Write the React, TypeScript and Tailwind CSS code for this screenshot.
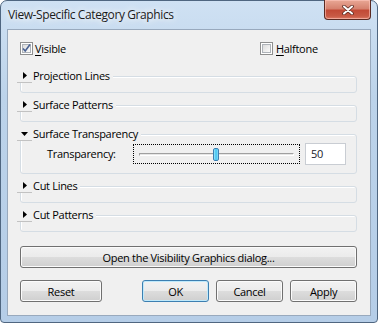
import React from 'react';

interface SectionProps {
  title: string;
  open?: boolean;
  children?: React.ReactNode;
}

function Checkbox({ checked = false }: { checked?: boolean }) {
  return (
    <div className="flex h-[13px] w-[13px] items-center justify-center border border-[#8e8f8f] bg-[#f4f4f4] shadow-[inset_0_0_0_1px_#fff]">
      <div className="flex h-[9px] w-[9px] items-center justify-center border border-[#aeb3b9] bg-gradient-to-br from-[#dcdcdc] to-[#fbfbfb]">
        {checked && (
          <svg width="9" height="9" viewBox="0 0 9 9" className="overflow-visible">
            <path d="M1 4.5 L3.2 7 L8 0.5" fill="none" stroke="#4a6293" strokeWidth="1.6" />
          </svg>
        )}
      </div>
    </div>
  );
}

function Section({ title, open = false, children }: SectionProps) {
  return (
    <fieldset className="rounded-[3px] border border-[#d5dde4] shadow-[inset_1px_1px_0_#fff]">
      <legend className="ml-[-4px] flex h-[14px] items-center bg-[#f0f0f0]">
        <div className="flex h-[14px] w-[15px] items-center justify-center border-b border-[#c2c2c2]">
          {open ? (
            <svg width="7" height="4" viewBox="0 0 7 4">
              <polygon points="0,0 7,0 3.5,4" fill="#000" />
            </svg>
          ) : (
            <svg width="4" height="7" viewBox="0 0 4 7">
              <polygon points="0,0 4,3.5 0,7" fill="#000" />
            </svg>
          )}
        </div>
        <span className="ml-[1px] pr-[3px] leading-[14px]">{title}</span>
      </legend>
      {children ?? <div className="h-[9px]" />}
    </fieldset>
  );
}

function WinButton({
  children,
  className = '',
  isDefault = false,
}: {
  children: React.ReactNode;
  className?: string;
  isDefault?: boolean;
}) {
  return (
    <button
      className={`flex h-[22px] items-center justify-center rounded-[3px] border bg-[linear-gradient(#f2f2f2_0%,#ebebeb_50%,#dddddd_50%,#cfcfcf_100%)] leading-none text-black ${
        isDefault
          ? 'border-[#3c7fb1] shadow-[inset_0_0_0_1px_#bfe9fb]'
          : 'border-[#707070] shadow-[inset_0_0_0_1px_#fbfbfb]'
      } ${className}`}
    >
      {children}
    </button>
  );
}

export default function App() {
  return (
    <div className="h-[323px] w-[378px] bg-white">
      <div className="h-[323px] w-[378px] rounded-t-[7px] rounded-b-[4px] border border-[#4f6680] bg-[linear-gradient(180deg,#cfe1f3_0%,#bcd3ea_30%,#b5cde7_100%)] font-['Open_Sans',sans-serif] text-[11px] tracking-[-0.3px] text-black">
        {/* Title bar */}
        <div className="flex h-[28px] items-start">
          <div className="pl-[7px] pt-[6px] text-[12px] leading-[16px] tracking-[-0.4px] text-[#1b1b1b] [text-shadow:0_0_6px_#fff,0_0_10px_#fff]">
            View-Specific Category Graphics
          </div>
          <button className="ml-auto mr-[6px] mt-[-1px] flex h-[20px] w-[47px] items-center justify-center rounded-b-[4px] border border-t-0 border-[#5a2a22] bg-[linear-gradient(#e9a896_0%,#d6826f_45%,#c24a36_55%,#c85a45_85%,#dd7a64_100%)] shadow-[inset_0_0_0_1px_rgba(255,200,190,0.6)]">
            <svg width="12" height="10" viewBox="0 0 12 10">
              <path d="M2 1.5 L10 8.5 M10 1.5 L2 8.5" stroke="#5a2a22" strokeWidth="3.6" strokeLinecap="round" />
              <path d="M2 1.5 L10 8.5 M10 1.5 L2 8.5" stroke="#fff" strokeWidth="2" strokeLinecap="round" />
            </svg>
          </button>
        </div>

        {/* Client area */}
        <div className="mx-[6px] h-[287px] border border-[#98a9bd] bg-[#f0f0f0] pl-[12px] pr-[13px] pt-[12px]">
          <div className="flex h-[13px] items-center">
            <div className="flex w-[240px] items-center">
              <Checkbox checked />
              <span className="ml-[2px] leading-[13px]">
                <span className="underline underline-offset-2">V</span>isible
              </span>
            </div>
            <div className="flex items-center">
              <Checkbox />
              <span className="ml-[3px] leading-[13px]">
                <span className="underline underline-offset-2">H</span>alftone
              </span>
            </div>
          </div>

          <div className="mt-[14px] flex flex-col gap-[5px]">
            <Section title="Projection Lines" />
            <Section title="Surface Patterns" />
            <Section title="Surface Transparency" open>
              <div className="h-[32px] pl-[26px] pt-[2px]">
                <div className="flex h-[22px] items-center">
                  <span className="w-[86px]">Transparency:</span>
                  <div className="flex h-[20px] w-[167px] items-center border border-dotted border-black px-[5px]">
                    <div className="relative h-[3px] flex-1 border-l border-t border-[#a0a0a0] border-b border-b-white border-r border-r-white bg-[#e6e6e6]">
                      <div className="absolute left-[73px] top-[-6px] h-[13px] w-[6px] rounded-[2px] border border-[#3c7fb1] bg-[linear-gradient(90deg,#9fe6fb,#3fc4f1_50%,#8bdcf7)]" />
                    </div>
                  </div>
                  <div className="ml-[5px] flex h-[22px] w-[41px] items-center border border-[#c9cdd3] bg-white pl-[5px] text-[#1a1a2a]">
                    50
                  </div>
                </div>
              </div>
            </Section>
            <Section title="Cut Lines" />
            <Section title="Cut Patterns" />
          </div>

          <WinButton className="mt-[14px] w-full">Open the Visibility Graphics dialog...</WinButton>

          <div className="mt-[12px] flex">
            <WinButton className="w-[82px]">Reset</WinButton>
            <div className="ml-auto flex gap-[7px]">
              <WinButton className="w-[67px]" isDefault>
                OK
              </WinButton>
              <WinButton className="w-[67px]">Cancel</WinButton>
              <WinButton className="w-[67px]">Apply</WinButton>
            </div>
          </div>
        </div>
      </div>
    </div>
  );
}
